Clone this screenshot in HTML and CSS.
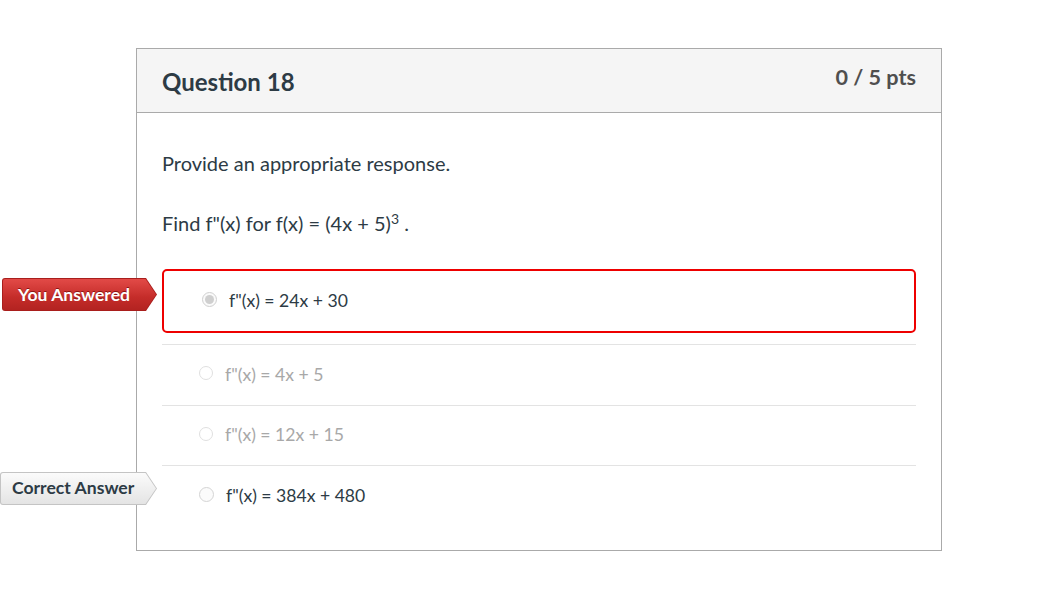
FILE: index.html
```html
<!DOCTYPE html>
<html>
<head>
<meta charset="utf-8">
<link rel="stylesheet" href="styles.css">
</head>
<body>
<div class="card">
  <div class="card-header">
    <h2 class="title">Question 18</h2>
    <div class="pts">0 / 5 pts</div>
  </div>
  <div class="card-body">
    <p class="prompt first">Provide an appropriate response.</p>
    <p class="prompt">Find f"(x) for f(x) = (4x + 5)<sup>3</sup> .</p>
    <div class="answers">
      <div class="answer wrong">
        <span class="tag tag-you"><span class="tag-label">You Answered</span></span>
        <span class="radio checked"></span>
        <span class="answer-text">f"(x) = 24x + 30</span>
      </div>
      <div class="answer muted">
        <span class="radio"></span>
        <span class="answer-text">f"(x) = 4x + 5</span>
      </div>
      <div class="answer muted">
        <span class="radio"></span>
        <span class="answer-text">f"(x) = 12x + 15</span>
      </div>
      <div class="answer correct">
        <span class="tag tag-correct"><span class="tag-label">Correct Answer</span></span>
        <span class="radio"></span>
        <span class="answer-text">f"(x) = 384x + 480</span>
      </div>
    </div>
  </div>
</div>
</body>
</html>
```
FILE: styles.css
```css
* { box-sizing: border-box; }
html { background: #fff; }
body {
  margin: 0;
  font-family: Lato, "Open Sans", sans-serif;
  color: #2d3b45;
  padding: 48px 0 0 136px;
}
.card {
  width: 806px;
  border: 1px solid #aaaaaa;
}
.card-header {
  background: #f5f5f5;
  border-bottom: 1px solid #aaaaaa;
  height: 64px;
  display: flex;
  justify-content: space-between;
  align-items: flex-start;
  padding: 0 25px;
}
.title {
  margin: 18px 0 0 0;
  font-size: 24px;
  font-weight: 700;
  line-height: 30px;
  color: #2d3b45;
}
.pts {
  margin-top: 14px;
  font-size: 21.6px;
  font-weight: 700;
  line-height: 28px;
  color: #4f4f4f;
}
.card-body {
  padding: 37px 25px 24px 25px;
}
.prompt {
  margin: 0 0 33px 0;
  font-size: 20px;
  line-height: 26px;
  color: #2d3b45;
}
.prompt.first { margin-bottom: 34px; }
.prompt sup {
  font-size: 14px;
  line-height: 0;
  vertical-align: 7px;
}
.answer {
  position: relative;
  display: flex;
  align-items: center;
  height: 60.5px;
  padding-left: 37px;
  border-top: 1px solid #e3e3e3;
  font-size: 17.6px;
}
.answer.wrong {
  height: 64px;
  border: 2px solid #ee0000;
  border-radius: 5px;
  padding-left: 38px;
  margin-bottom: 11px;
}
.answer.correct { height: 61px; color: #2d3b45; }
.answer.muted { color: #a8a8a8; }
.answer-text {
  margin-left: 12px;
  line-height: 22px;
}
.radio {
  width: 15px;
  height: 15px;
  border-radius: 50%;
  border: 1px solid #d4d4d4;
  background: #fbfbfb;
  display: inline-block;
  position: relative;
  flex: none;
  margin-top: -3px;
}
.answer.muted .radio { border-color: #e0e0e0; background: #fff; width: 14px; height: 14px; }
.radio.checked {
  border-color: #d0d0d0;
  background: #fafafa;
}
.radio.checked::after {
  content: "";
  position: absolute;
  left: 2px;
  top: 2px;
  width: 9px;
  height: 9px;
  border-radius: 50%;
  background: #cfcfcf;
}
.tag {
  position: absolute;
  height: 33px;
  width: 157px;
  font-size: 17.6px;
  font-weight: 700;
  line-height: 33px;
  border-radius: 3px 0 0 3px;
  clip-path: polygon(0 0, 146px 0, 157px 50%, 146px 100%, 0 100%);
}
.tag::before {
  content: "";
  position: absolute;
  left: 1px;
  top: 1px;
  right: 1px;
  bottom: 1px;
  border-radius: 2px 0 0 2px;
  clip-path: polygon(0 0, 144.5px 0, 155px 50%, 144.5px 100%, 0 100%);
}
.tag-label {
  position: relative;
  white-space: nowrap;
}
.tag-you {
  left: -162px;
  top: 7px;
  width: 155px;
  color: #fff;
  background: #a91e1c;
  padding-left: 16px;
  text-shadow: 0 -1px 0 #8a1412;
  clip-path: polygon(0 0, 144px 0, 155px 50%, 144px 100%, 0 100%);
}
.tag-you::before {
  clip-path: polygon(0 0, 142.5px 0, 153px 50%, 142.5px 100%, 0 100%);
  background: linear-gradient(#e24a47, #c42c29 60%, #b32321);
}
.tag-correct {
  left: -162px;
  top: 6px;
  color: #2d3b45;
  background: #c4c4c4;
  padding-left: 12px;
  line-height: 32px;
}
.tag-correct::before {
  background: linear-gradient(#fbfbfb, #e4e4e4);
}
```
